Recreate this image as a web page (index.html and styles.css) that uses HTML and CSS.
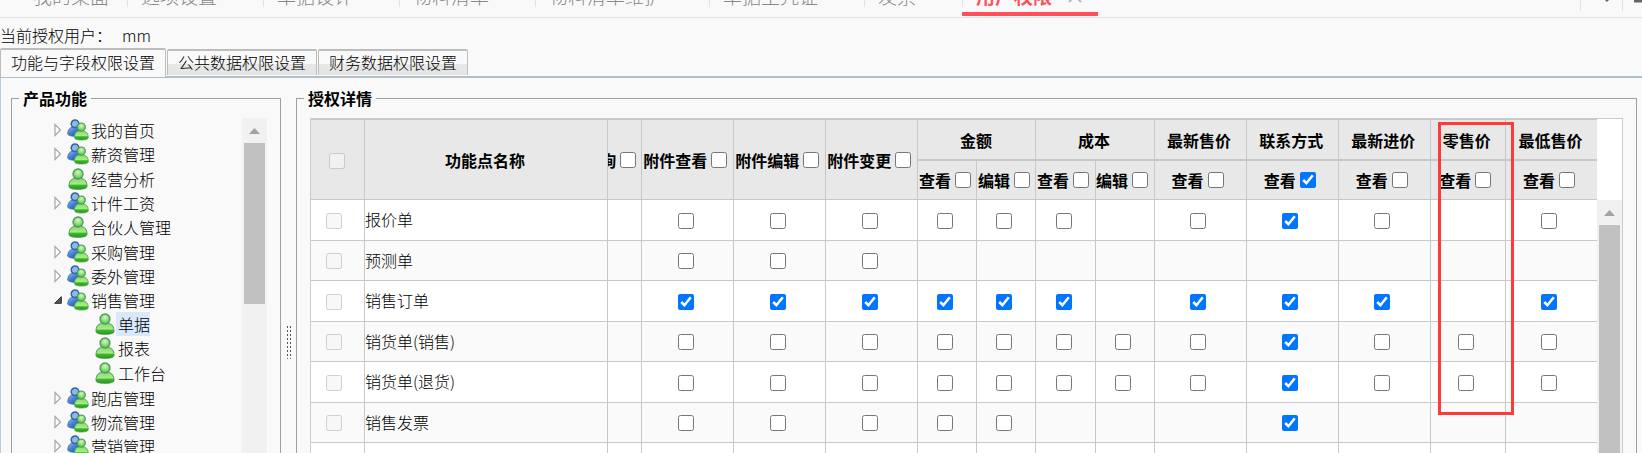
FILE: index.html
```html
<!DOCTYPE html>
<html lang="zh-CN">
<head>
    <meta charset="UTF-8">
    <meta name="viewport" content="width=device-width, initial-scale=1.0">
    <title>用户权限</title>
    <link rel="stylesheet" href="styles.css">
</head>
<body>
    <!-- Shared icons -->
    <svg class="icon-defs" aria-hidden="true">
        <defs>
            <linearGradient id="green-body" x1="0" y1="0" x2="0" y2="1">
                <stop offset="0" stop-color="#8fd873"/>
                <stop offset="0.5" stop-color="#a4ec84"/>
                <stop offset="0.65" stop-color="#3fb52c"/>
                <stop offset="1" stop-color="#23961b"/>
            </linearGradient>
            <radialGradient id="green-head" cx="0.5" cy="0.35" r="0.6">
                <stop offset="0" stop-color="#d2fbc0"/>
                <stop offset="1" stop-color="#5fc54c"/>
            </radialGradient>
            <linearGradient id="blue-body" x1="0" y1="0" x2="1" y2="1">
                <stop offset="0" stop-color="#8dbcec"/>
                <stop offset="0.5" stop-color="#3b78cc"/>
                <stop offset="1" stop-color="#1a4f9f"/>
            </linearGradient>
            <symbol id="icon-user" viewBox="0 0 20 22">
                <path d="M1 18.5C1 13.5 3 11 6.5 10.5h7C17 11 19 13.5 19 18.5c0 2-4 2.8-9 2.8s-9-.8-9-2.8z" fill="url(#green-body)" stroke="#4c9a55"/>
                <circle cx="10" cy="6" r="5" fill="url(#green-head)" stroke="#4c9a62" stroke-width="1.3"/>
            </symbol>
            <symbol id="icon-group" viewBox="0 0 22 22">
                <path d="M.7 14.5C1 10.500 3 8.500 5.500 8h5c2 .8 3.500 3 3.500 7 0 1.500-3 2.500-6.500 2.300S.7 16.500.7 14.500z" fill="url(#blue-body)" stroke="#3668ac" stroke-width=".8"/>
                <circle cx="8" cy="4.800" r="3.800" fill="#8abaea" stroke="#35649f" stroke-width="1.500"/>
                <path d="M7.500 18.500c0-4 1.500-6 4-6.500h5.500c2.500.5 4.300 2.500 4.300 6.500 0 1.800-3.300 2.500-7 2.500s-6.800-.7-6.800-2.500z" fill="url(#green-body)" stroke="#4caa48" stroke-width=".8"/>
                <circle cx="14.300" cy="8" r="4" fill="url(#green-head)" stroke="#4c9a55" stroke-width="1.200"/>
            </symbol>
            <symbol id="icon-closed" viewBox="0 0 8 14">
                <path d="M1 1.500v11l5.500-5.500z" fill="#fff" stroke="#a6a6a6" stroke-width="1.200"/>
            </symbol>
            <symbol id="icon-open" viewBox="0 0 8 8">
                <path d="M7.300.7v6.600H.7z" fill="#595959" stroke="#262626"/>
            </symbol>
        </defs>
    </svg>

    <!-- Page tabs -->
    <nav class="topbar">
        <a class="page-tab home" href="#"><span>我的桌面</span></a>
        <a class="page-tab" href="#"><span>选项设置</span></a>
        <a class="page-tab" href="#"><span>单据设计</span></a>
        <a class="page-tab" href="#"><span>物料清单</span></a>
        <a class="page-tab" href="#"><span>物料清单维护</span></a>
        <a class="page-tab" href="#"><span>单据生凭证</span></a>
        <a class="page-tab" href="#"><span>发票</span></a>
        <a class="page-tab active" href="#"><span>用户权限<svg class="close" viewBox="0 0 14 14"><path d="M1 1l12 12M13 1L1 13"/></svg></span></a>
        <div class="topbar-tools">
            <button type="button" aria-label="搜索"><svg viewBox="0 0 20 20"><circle cx="8" cy="8" r="6"/><path d="M13 13l5 5"/></svg></button>
            <button type="button" aria-label="菜单"><svg viewBox="0 0 20 20"><path d="M2 3h16M2 10h16M2 18h16"/></svg></button>
        </div>
    </nav>

    <div class="current-user">当前授权用户：<span class="user-name">mm</span></div>

    <div class="tabs">
        <button type="button" class="tab selected">功能与字段权限设置</button>
        <button type="button" class="tab">公共数据权限设置</button>
        <button type="button" class="tab">财务数据权限设置</button>
    </div>

    <main class="content">
        <!-- Function tree -->
        <fieldset class="panel tree-panel">
            <legend>产品功能</legend>
            <div class="tree-box">
                <ul class="tree" id="tree"></ul>
                <div class="scrollbar"><div class="arrow-up"></div><div class="thumb short"></div></div>
            </div>
        </fieldset>

        <div class="splitter"><div class="grip"></div></div>

        <!-- Permission details -->
        <fieldset class="panel detail-panel">
            <legend>授权详情</legend>
            <div class="grid">
                <div class="table-wrap">
                    <table>
                        <colgroup>
                            <col class="w-check"><col class="w-name"><col class="w-cut">
                            <col class="w-wide"><col class="w-wide"><col class="w-wide">
                            <col class="w-small"><col class="w-small"><col class="w-small"><col class="w-small">
                            <col class="w-wide"><col class="w-wide"><col class="w-wide"><col class="w-mid"><col class="w-wide">
                        </colgroup>
                        <thead>
                            <tr>
                                <th rowspan="2"><input type="checkbox" aria-label="全选" disabled></th>
                                <th rowspan="2">功能点名称</th>
                                <th rowspan="2"><label class="cut">查询<input type="checkbox"></label></th>
                                <th rowspan="2"><label>附件查看<input type="checkbox"></label></th>
                                <th rowspan="2"><label>附件编辑<input type="checkbox"></label></th>
                                <th rowspan="2"><label>附件变更<input type="checkbox"></label></th>
                                <th colspan="2">金额</th>
                                <th colspan="2">成本</th>
                                <th>最新售价</th>
                                <th>联系方式</th>
                                <th>最新进价</th>
                                <th>零售价</th>
                                <th>最低售价</th>
                            </tr>
                            <tr>
                                <th><label>查看<input type="checkbox"></label></th>
                                <th><label>编辑<input type="checkbox"></label></th>
                                <th><label>查看<input type="checkbox"></label></th>
                                <th><label>编辑<input type="checkbox"></label></th>
                                <th><label>查看<input type="checkbox"></label></th>
                                <th><label>查看<input type="checkbox" checked></label></th>
                                <th><label>查看<input type="checkbox"></label></th>
                                <th><label>查看<input type="checkbox"></label></th>
                                <th><label>查看<input type="checkbox"></label></th>
                            </tr>
                        </thead>
                        <tbody id="rows"></tbody>
                    </table>
                    <div class="highlight"></div>
                </div>
                <div class="grid-side">
                    <div class="scrollbar"><div class="arrow-up"></div><div class="thumb"></div></div>
                </div>
            </div>
        </fieldset>
    </main>

    <script src="app.js"></script>
</body>
</html>
```
FILE: styles.css
```css
* {
    box-sizing: border-box;
}

body {
    margin: 0;
    height: 100vh;
    overflow: hidden;
    background-color: #f9f9f9;
    color: #000;
    font-family: "Noto Sans CJK SC", "Microsoft YaHei", sans-serif;
    font-size: 16px;
    font-weight: 300;
    line-height: 24px;
}

.icon-defs {
    position: absolute;
    width: 0;
    height: 0;
}

.topbar {
    display: flex;
    align-items: flex-end;
    height: 18px;
    border-bottom: 1px solid #e4e4e8;
    overflow: hidden;
}

.page-tab {
    flex: none;
    padding-bottom: 5px;
    margin-bottom: 1px;
    border-bottom: 4px solid transparent;
    color: #888;
    font-size: 19px;
    line-height: 22px;
    text-decoration: none;
}

.page-tab span {
    display: flex;
    align-items: center;
    height: 22px;
    padding: 0 46px 0 13px;
    border-left: 1px solid #dfe1ee;
}

.page-tab.home span {
    padding: 0 18px 0 32px;
    border-left-color: transparent;
}

.page-tab.active {
    border-bottom-color: #ff4f57;
    color: #ff4f57;
    font-weight: bold;
}

.page-tab.active span {
    padding-right: 16px;
}

.close {
    width: 14px;
    height: 14px;
    margin-left: 16px;
    fill: none;
    stroke: #bbb;
    stroke-width: 2;
}

.topbar-tools {
    display: flex;
    align-self: flex-end;
    margin-left: auto;
    margin-bottom: 6px;
}

.topbar-tools button {
    display: flex;
    align-items: flex-end;
    width: 42px;
    height: 32px;
    padding: 0 0 8px 9px;
    border: 0;
    border-left: 1px solid #e0e0ea;
    background: none;
}

.topbar-tools button:last-child {
    width: 20px;
}

.topbar-tools svg {
    flex: none;
    width: 20px;
    height: 20px;
    fill: none;
    stroke: #666;
    stroke-width: 3;
}

.current-user {
    height: 30px;
    padding-top: 5px;
}

.user-name {
    margin-left: 10px;
}

/* Setting tabs */
.tabs {
    display: flex;
    align-items: flex-end;
    gap: 1px;
    height: 30px;
    border-bottom: 2px solid #b3bfc6;
}

.tab {
    height: 26px;
    padding: 0 10px 2px;
    border: 1px solid #bdbdbd;
    border-width: 2px 1px 0;
    border-radius: 2px 2px 0 0;
    background: linear-gradient(#f9f9f9 55%, #e8e8e8 56%, #e4e4e4);
    color: #000;
    font: inherit;
    line-height: 22px;
    margin-bottom: 1px;
}

.tab.selected {
    height: 29px;
    margin-bottom: -1px;
    padding-bottom: 4px;
    background: #f9f9f9;
}

/* Panels */
.content {
    display: flex;
    padding: 8px 5px 0 10px;
    border-left: 1px solid #b9cbe0;
}

.panel {
    min-width: 0;
    margin: 0;
    padding: 0;
    border: 1px solid #a0a0a0;
}

.panel legend {
    margin-left: 7px;
    padding: 0 4px;
    font-weight: bold;
}

.tree-panel {
    flex: 0 0 270px;
}

.detail-panel {
    flex: 1;
}

.splitter {
    flex: 0 0 15px;
    padding: 239px 5px 0;
}

.grip {
    height: 34px;
    background-image: radial-gradient(circle, #555 1px, transparent 1px);
    background-size: 3px 4px;
}

/* Tree */
.tree-box {
    display: flex;
    padding: 8px 13px 0 42px;
}

.tree {
    flex: 1;
    margin: 0;
    padding: 0;
    list-style: none;
}

.tree ul {
    margin: 0;
    padding: 0 0 0 27px;
    list-style: none;
}

.tree li:nth-child(3n) {
    padding-top: 1px;
}

.node {
    display: flex;
    align-items: center;
    height: 24px;
}

.toggle {
    width: 8px;
    height: 14px;
    margin-right: 5px;
}

.toggle.open {
    height: 8px;
}

.node .icon {
    width: 22px;
    height: 22px;
}

.node .label {
    padding-left: 2px;
}

.node.current .label {
    background-color: #d9e8fb;
}

/* Scrollbars */
.scrollbar {
    flex: none;
    width: 25px;
    padding: 0 2px;
    background-color: #f1f1f1;
}

.arrow-up {
    height: 25px;
    padding: 10px 5px 0;
}

.arrow-up::before {
    content: "";
    display: block;
    height: 6px;
    background-color: #a3a3a3;
    clip-path: polygon(50% 0, 100% 100%, 0 100%);
}

.thumb {
    height: 400px;
    background-color: #c1c1c1;
}

.thumb.short {
    height: 161px;
}

/* Permission grid */
.grid {
    display: flex;
    margin: 8px 13px 0;
    border: 1px solid #ccc;
    background-color: #fff;
}

.table-wrap {
    position: relative;
    flex: 1;
    overflow: hidden;
}

.grid-side {
    flex: none;
    padding-top: 81px;
    overflow: hidden;
    height: 364px;
}

table {
    width: 1287px;
    border-collapse: separate;
    border-spacing: 0;
    table-layout: fixed;
}

.w-check {
    width: 54px;
}

.w-name {
    width: 243px;
}

.w-cut {
    width: 34px;
}

.w-wide {
    width: 92px;
}

.w-mid {
    width: 75px;
}

.w-small {
    width: 59px;
}

th,
td {
    padding: 0;
    border-right: 1px solid #c8c8c8;
    border-bottom: 1px solid #c8c8c8;
    white-space: nowrap;
}

th {
    height: 40px;
    padding-right: 2px;
    border-top: 1px solid #c8c8c8;
    background-color: #e8e8e8;
    font-weight: bold;
}

tr:first-child th {
    height: 41px;
}

th label {
    display: flex;
    align-items: center;
    justify-content: center;
}

th label.cut {
    justify-content: flex-end;
    overflow: hidden;
}

input[type="checkbox"] {
    flex: none;
    width: 16px;
    height: 16px;
    margin: 3px 3px 3px 4px;
    vertical-align: middle;
}

td {
    height: 40px;
    padding: 0 5px 2px 0;
    text-align: center;
}

tbody tr:nth-child(odd) td {
    height: 41px;
}

tbody tr:nth-child(even) td {
    background-color: #fafafa;
}

td:first-child {
    padding-right: 8px;
}

td.name {
    text-align: left;
}

/* Marks the retail price column */
.highlight {
    position: absolute;
    top: 3px;
    left: 1127px;
    width: 76px;
    height: 293px;
    border: 3px solid #ff3a3a;
    pointer-events: none;
}
```
FILE: app.js
```js
const treeData = [
    { name: '我的首页', group: true },
    { name: '薪资管理', group: true },
    { name: '经营分析' },
    { name: '计件工资', group: true },
    { name: '合伙人管理' },
    { name: '采购管理', group: true },
    { name: '委外管理', group: true },
    { name: '销售管理', group: true, children: [
        { name: '单据', current: true },
        { name: '报表' },
        { name: '工作台' }
    ] },
    { name: '跑店管理', group: true },
    { name: '物流管理', group: true },
    { name: '营销管理', group: true }
];

// One character per column: '.' no permission, '0' unchecked, '1' checked
const rowData = [
    ['报价单', '.000000.' + '010.0'],
    ['预测单', '.000....' + '.....'],
    ['销售订单', '.111111.' + '111.1'],
    ['销货单(销售)', '.0000000' + '01000'],
    ['销货单(退货)', '.0000000' + '01000'],
    ['销售发票', '.00000..' + '.1...'],
    ['', '........' + '.....']
];

// Build the function tree
function renderNodes(nodes) {
    return nodes.map(node => {
        const state = node.children ? 'open' : 'closed';
        const toggle = node.group ? `<use href="#icon-${state}"/>` : '';
        const icon = node.group ? 'icon-group' : 'icon-user';
        const children = node.children ? `<ul>${renderNodes(node.children)}</ul>` : '';
        return `<li><div class="node${node.current ? ' current' : ''}">
            <svg class="toggle ${state}">${toggle}</svg>
            <svg class="icon"><use href="#${icon}"/></svg>
            <span class="label">${node.name}</span>
        </div>${children}</li>`;
    }).join('');
}

// Build the permission rows
function renderRow([name, cells]) {
    const boxes = [...cells].map(c => c === '.'
        ? '<td></td>'
        : `<td><input type="checkbox" aria-label="${name}"${c === '1' ? ' checked' : ''}></td>`);
    const first = name ? `<input type="checkbox" aria-label="${name}" disabled>` : '';
    return `<tr><td>${first}</td><td class="name">${name}</td>${boxes.join('')}</tr>`;
}

document.getElementById('tree').innerHTML = renderNodes(treeData);
document.getElementById('rows').innerHTML = rowData.map(renderRow).join('');
```
